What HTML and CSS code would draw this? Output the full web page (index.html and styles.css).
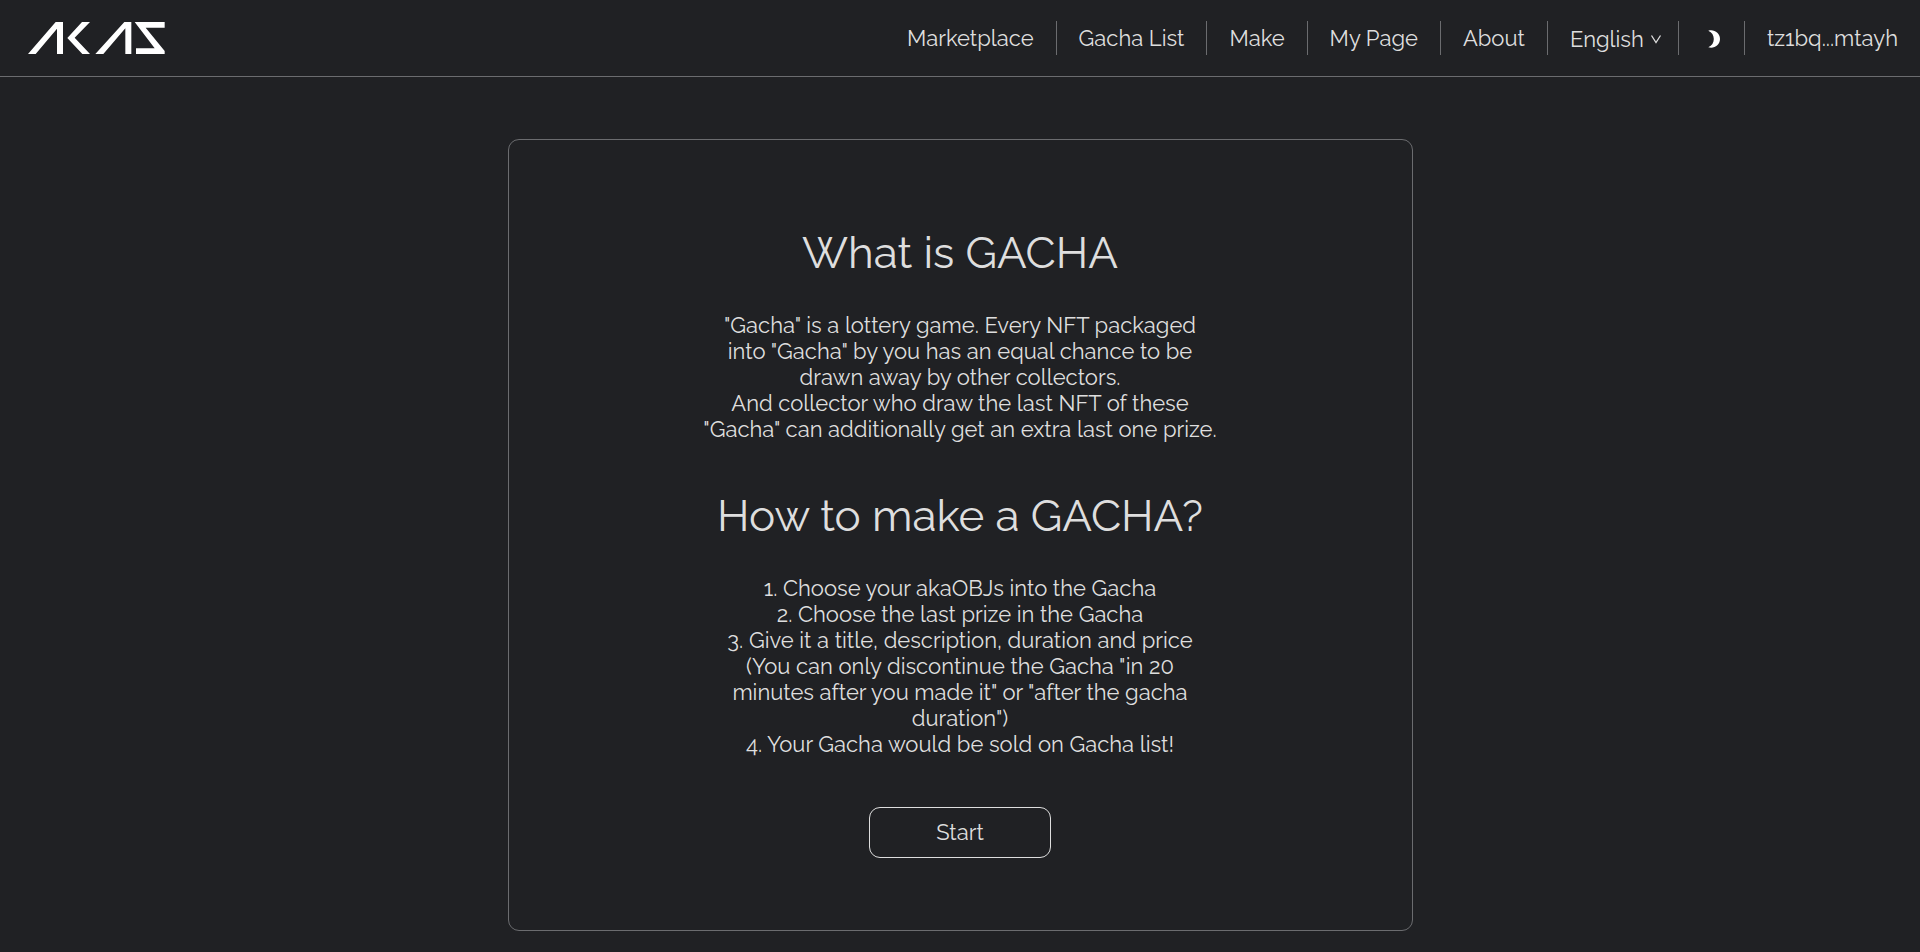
FILE: index.html
```html
<!DOCTYPE html>
<html lang="en">
<head>
<meta charset="utf-8">
<meta name="viewport" content="width=device-width, initial-scale=1">
<title>AKAS - Make a Gacha</title>
<link rel="stylesheet" href="styles.css">
</head>
<body>
<header class="header">
  <a class="logo" href="#" aria-label="AKAS">
    <svg class="logo-mark" viewBox="84 66 411 96" aria-hidden="true">
      <polygon points="84,162 167,66 189,66 189,162 171,162 171,86 107,162"/>
      <polygon points="246,66 270,66 224,113 270,162 247,162 202,114"/>
      <polygon points="286,162 373,66 394,66 394,162 376,162 376,85 310,162"/>
      <polygon points="404,66 494,66 494,83 437,83 494,153 494,162 408,162 408,145 464,145"/>
    </svg>
  </a>
  <nav class="nav">
    <a class="nav-item" href="#">Marketplace</a>
    <a class="nav-item" href="#">Gacha List</a>
    <a class="nav-item" href="#">Make</a>
    <a class="nav-item" href="#">My Page</a>
    <a class="nav-item" href="#">About</a>
    <div class="nav-item nav-language">
      <select class="language" aria-label="Language"><option>English</option></select>
      <svg class="chevron" viewBox="0 0 12 10" aria-hidden="true"><path d="M1.5 1.5 L6 8.5 L10.5 1.5"/></svg>
    </div>
    <button class="nav-item theme" type="button" aria-label="Dark mode">
      <svg class="moon" viewBox="0 0 12 18" aria-hidden="true"><path d="M0.3 0.8 C6 -1 12 3 12 9 C12 15 6 19 0.3 17.2 C4 15.8 5.8 12.5 5.8 9 C5.8 5.5 4 2.2 0.3 0.8 Z"/></svg>
    </button>
    <a class="nav-item" href="#">tz1bq...mtayh</a>
  </nav>
</header>
<main class="page">
  <section class="card">
    <h1 class="title">What is GACHA</h1>
    <p class="text">"Gacha" is a lottery game. Every NFT packaged<br>into "Gacha" by you has an equal chance to be<br>drawn away by other collectors.<br>And collector who draw the last NFT of these<br>"Gacha" can additionally get an extra last one prize.</p>
    <h2 class="title">How to make a GACHA?</h2>
    <p class="text">1. Choose your akaOBJs into the Gacha<br>2. Choose the last prize in the Gacha<br>3. Give it a title, description, duration and price<br>(You can only discontinue the Gacha "in 20<br>minutes after you made it" or "after the gacha<br>duration")<br>4. Your Gacha would be sold on Gacha list!</p>
    <button class="start" type="button">Start</button>
  </section>
</main>
</body>
</html>
```
FILE: styles.css
```css
* { box-sizing: border-box; }

body {
  margin: 0;
  background: #202124;
  color: #dedede;
  font-family: Raleway, Lato, sans-serif;
  font-size: 22px;
  line-height: 26px;
}

.header {
  display: flex;
  align-items: center;
  justify-content: space-between;
  padding: 21px 0 21px 28px;
  border-bottom: 1px solid #6b6c6f;
}

.logo, .logo-mark { display: block; }
.logo-mark { width: 137px; height: 32px; fill: #fff; }

.nav { display: flex; }

.nav-item {
  display: flex;
  align-items: center;
  height: 34px;
  padding: 0 22px;
  border: 0;
  border-right: 1px solid #6b6c6f;
  background: none;
  color: inherit;
  font: inherit;
  text-decoration: none;
}
.nav-item:last-child { border-right: 0; }

.nav-language { gap: 6px; padding: 2px 16px 0 22px; }

.language {
  appearance: none;
  padding: 0;
  border: 0;
  background: none;
  color: inherit;
  font: inherit;
}

.chevron { width: 12px; height: 10px; fill: none; stroke: #dedede; stroke-width: 1.3; }

.theme { padding: 2px 24px 0 29px; }
.moon { width: 12px; height: 18px; fill: #fff; }

.page { padding: 62px 24px 21px; }

.card {
  display: flex;
  flex-direction: column;
  align-items: center;
  max-width: 905px;
  margin: 0 auto;
  padding: 87px 24px 72px;
  border: 1px solid #6b6c6f;
  border-radius: 11px;
  text-align: center;
}

.title {
  margin: 0 0 33px;
  font-size: 44px;
  font-weight: 400;
  line-height: 52px;
}

.text { margin: 0 0 48px; }

.start {
  width: 182px;
  height: 51px;
  margin-top: 2px;
  padding: 0 0 2px;
  border: 1px solid #dedede;
  border-radius: 11px;
  background: none;
  color: inherit;
  font: inherit;
}
```
